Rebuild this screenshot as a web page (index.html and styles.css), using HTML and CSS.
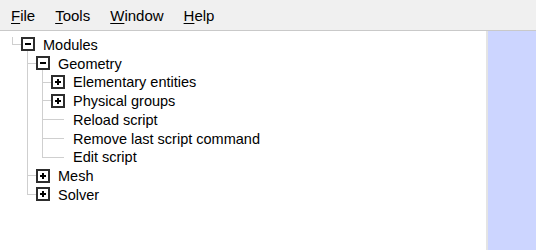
FILE: index.html
```html
<!DOCTYPE html>
<html>
<head>
<meta charset="utf-8">
<link rel="stylesheet" href="styles.css">
</head>
<body>
<div class="menubar">
  <span class="menu"><u>F</u>ile</span>
  <span class="menu"><u>T</u>ools</span>
  <span class="menu"><u>W</u>indow</span>
  <span class="menu"><u>H</u>elp</span>
</div>
<div class="main">
  <div class="tree">
    <ul class="root">
      <li class="item">
        <div class="row"><span class="box minus"></span><span class="label">Modules</span></div>
        <ul>
          <li class="item">
            <div class="row"><span class="box minus"></span><span class="label">Geometry</span></div>
            <ul>
              <li class="item"><div class="row"><span class="box plus"></span><span class="label">Elementary entities</span></div></li>
              <li class="item"><div class="row"><span class="box plus"></span><span class="label">Physical groups</span></div></li>
              <li class="item leaf"><div class="row"><span class="spacer"></span><span class="label">Reload script</span></div></li>
              <li class="item leaf"><div class="row"><span class="spacer"></span><span class="label">Remove last script command</span></div></li>
              <li class="item leaf"><div class="row"><span class="spacer"></span><span class="label">Edit script</span></div></li>
            </ul>
          </li>
          <li class="item"><div class="row"><span class="box plus"></span><span class="label">Mesh</span></div></li>
          <li class="item"><div class="row"><span class="box plus"></span><span class="label">Solver</span></div></li>
        </ul>
      </li>
    </ul>
  </div>
  <div class="splitter"></div>
  <div class="panel"></div>
</div>
</body>
</html>
```
FILE: styles.css
```css
html, body {
  margin: 0;
  padding: 0;
  background: #ffffff;
  font-family: "Liberation Sans", Arial, sans-serif;
  color: #000;
}
body {
  width: 536px;
  height: 250px;
  display: flex;
  flex-direction: column;
  overflow: hidden;
}
.menubar {
  height: 30px;
  background: #f0f0f0;
  border-bottom: 1px solid #c9c9c9;
  display: flex;
  align-items: center;
  padding-left: 1px;
  font-size: 15px;
  flex: none;
}
.menu {
  padding: 0 10px;
  line-height: 30px;
  padding-top: 1px;
}
.menu u {
  text-decoration-thickness: 1px;
  text-underline-offset: 2px;
}
.main {
  flex: 1;
  display: flex;
}
.tree {
  flex: 1;
  padding-top: 4px;
  font-size: 14.5px;
}
.splitter {
  width: 2px;
  background: #e4e4e4;
}
.panel {
  width: 48px;
  background: #ccd5ff;
}
ul {
  list-style: none;
  margin: 0;
  padding: 0 0 0 15px;
}
ul.root {
  padding-left: 0;
}
.item {
  position: relative;
}
.item::before {
  content: "";
  position: absolute;
  left: 12px;
  top: -4px;
  bottom: 0;
  border-left: 1px solid #cfcfcf;
}
.item:last-child::before {
  bottom: auto;
  height: 13.4px;
}
.root > .item::before {
  top: 2px;
  height: 7.4px;
}
.item::after {
  content: "";
  position: absolute;
  left: 12px;
  top: 9px;
  width: 9px;
  border-top: 1px solid #cfcfcf;
}
.item.leaf::after {
  width: 22px;
}
.row {
  height: 18.75px;
  display: flex;
  align-items: center;
  padding-left: 21px;
  position: relative;
  z-index: 1;
}
.box {
  width: 14px;
  height: 14px;
  box-sizing: border-box;
  border: 2px solid #2d2d2d;
  background: #fff;
  margin-right: 8px;
  position: relative;
  flex: none;
}
.box::before {
  content: "";
  position: absolute;
  left: 2px;
  top: 4px;
  width: 6px;
  height: 2px;
  background: #000;
}
.box.plus::after {
  content: "";
  position: absolute;
  left: 4px;
  top: 2px;
  width: 2px;
  height: 6px;
  background: #000;
}
.spacer {
  width: 14px;
  margin-right: 8px;
  flex: none;
}
.label {
  white-space: nowrap;
  line-height: 18px;
  padding-top: 1px;
}
```
